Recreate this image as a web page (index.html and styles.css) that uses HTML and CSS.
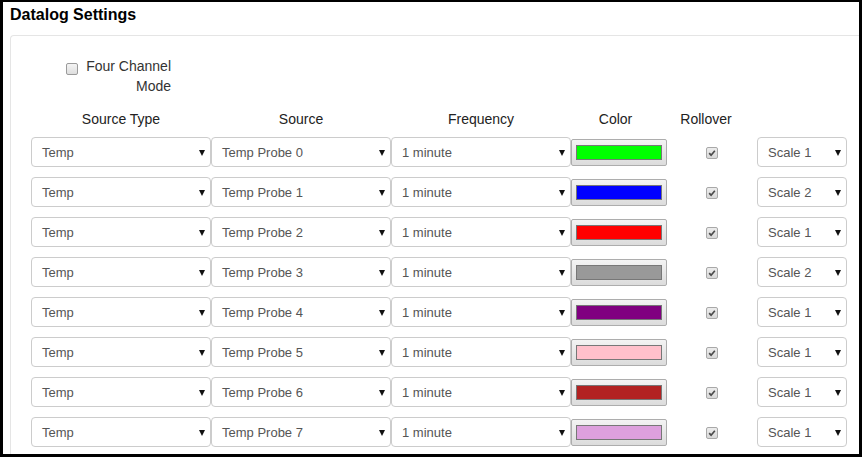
FILE: index.html
```html
<!DOCTYPE html>
<html>
<head>
<meta charset="utf-8">
<link rel="stylesheet" href="styles.css">
</head>
<body>
<div class="frame">
  <div class="title">Datalog Settings</div>
  <div class="panel">
    <div class="fourch">
      <span class="cb4"></span>
      <span class="fourch-text">Four Channel Mode</span>
    </div>
    <div class="grid head">
      <div class="h">Source Type</div>
      <div class="h">Source</div>
      <div class="h">Frequency</div>
      <div class="h h-color">Color</div>
      <div class="h h-roll">Rollover</div>
      <div></div>
    </div>

    <div class="grid row">
      <div class="sel"><span>Temp</span><i class="caret"></i></div>
      <div class="sel"><span>Temp Probe 0</span><i class="caret"></i></div>
      <div class="sel"><span>1 minute</span><i class="caret"></i></div>
      <div class="cbtn"><span class="sw sw-green"></span></div>
      <div class="rc"><span class="chk"><svg viewBox="0 0 12 12"><path d="M2.6 6.2 L4.9 8.6 L9.4 3.2" /></svg></span></div>
      <div class="sel"><span>Scale 1</span><i class="caret"></i></div>
    </div>
    <div class="grid row">
      <div class="sel"><span>Temp</span><i class="caret"></i></div>
      <div class="sel"><span>Temp Probe 1</span><i class="caret"></i></div>
      <div class="sel"><span>1 minute</span><i class="caret"></i></div>
      <div class="cbtn"><span class="sw sw-blue"></span></div>
      <div class="rc"><span class="chk"><svg viewBox="0 0 12 12"><path d="M2.6 6.2 L4.9 8.6 L9.4 3.2" /></svg></span></div>
      <div class="sel"><span>Scale 2</span><i class="caret"></i></div>
    </div>
    <div class="grid row">
      <div class="sel"><span>Temp</span><i class="caret"></i></div>
      <div class="sel"><span>Temp Probe 2</span><i class="caret"></i></div>
      <div class="sel"><span>1 minute</span><i class="caret"></i></div>
      <div class="cbtn"><span class="sw sw-red"></span></div>
      <div class="rc"><span class="chk"><svg viewBox="0 0 12 12"><path d="M2.6 6.2 L4.9 8.6 L9.4 3.2" /></svg></span></div>
      <div class="sel"><span>Scale 1</span><i class="caret"></i></div>
    </div>
    <div class="grid row">
      <div class="sel"><span>Temp</span><i class="caret"></i></div>
      <div class="sel"><span>Temp Probe 3</span><i class="caret"></i></div>
      <div class="sel"><span>1 minute</span><i class="caret"></i></div>
      <div class="cbtn"><span class="sw sw-gray"></span></div>
      <div class="rc"><span class="chk"><svg viewBox="0 0 12 12"><path d="M2.6 6.2 L4.9 8.6 L9.4 3.2" /></svg></span></div>
      <div class="sel"><span>Scale 2</span><i class="caret"></i></div>
    </div>
    <div class="grid row">
      <div class="sel"><span>Temp</span><i class="caret"></i></div>
      <div class="sel"><span>Temp Probe 4</span><i class="caret"></i></div>
      <div class="sel"><span>1 minute</span><i class="caret"></i></div>
      <div class="cbtn"><span class="sw sw-purple"></span></div>
      <div class="rc"><span class="chk"><svg viewBox="0 0 12 12"><path d="M2.6 6.2 L4.9 8.6 L9.4 3.2" /></svg></span></div>
      <div class="sel"><span>Scale 1</span><i class="caret"></i></div>
    </div>
    <div class="grid row">
      <div class="sel"><span>Temp</span><i class="caret"></i></div>
      <div class="sel"><span>Temp Probe 5</span><i class="caret"></i></div>
      <div class="sel"><span>1 minute</span><i class="caret"></i></div>
      <div class="cbtn"><span class="sw sw-pink"></span></div>
      <div class="rc"><span class="chk"><svg viewBox="0 0 12 12"><path d="M2.6 6.2 L4.9 8.6 L9.4 3.2" /></svg></span></div>
      <div class="sel"><span>Scale 1</span><i class="caret"></i></div>
    </div>
    <div class="grid row">
      <div class="sel"><span>Temp</span><i class="caret"></i></div>
      <div class="sel"><span>Temp Probe 6</span><i class="caret"></i></div>
      <div class="sel"><span>1 minute</span><i class="caret"></i></div>
      <div class="cbtn"><span class="sw sw-brick"></span></div>
      <div class="rc"><span class="chk"><svg viewBox="0 0 12 12"><path d="M2.6 6.2 L4.9 8.6 L9.4 3.2" /></svg></span></div>
      <div class="sel"><span>Scale 1</span><i class="caret"></i></div>
    </div>
    <div class="grid row">
      <div class="sel"><span>Temp</span><i class="caret"></i></div>
      <div class="sel"><span>Temp Probe 7</span><i class="caret"></i></div>
      <div class="sel"><span>1 minute</span><i class="caret"></i></div>
      <div class="cbtn"><span class="sw sw-plum"></span></div>
      <div class="rc"><span class="chk"><svg viewBox="0 0 12 12"><path d="M2.6 6.2 L4.9 8.6 L9.4 3.2" /></svg></span></div>
      <div class="sel"><span>Scale 1</span><i class="caret"></i></div>
    </div>
  </div>
</div>
</body>
</html>
```

FILE: styles.css
```css
html, body {
  margin: 0;
  padding: 0;
  background: #000;
}

body {
  font-family: "Liberation Sans", Arial, sans-serif;
  font-size: 14px;
  color: #333;
}

.frame {
  width: 862px;
  height: 457px;
  box-sizing: border-box;
  border-style: solid;
  border-color: #000;
  border-width: 2px 3px 3px 3px;
  background: #fff;
  overflow: hidden;
}

.title {
  height: 33px;
  box-sizing: border-box;
  padding: 4px 0 0 7px;
  font-size: 16px;
  font-weight: bold;
  line-height: 18px;
  color: #000;
}

.panel {
  margin-left: 7px;
  height: 430px;
  border-left: 1px solid #e5e5e5;
  border-top: 1px solid #e5e5e5;
  border-top-left-radius: 4px;
}

.fourch {
  display: flex;
  align-items: flex-start;
  margin-left: 55px;
  padding-top: 20px;
  line-height: 20px;
  color: #333;
}

.cb4 {
  width: 12px;
  height: 12px;
  margin-top: 7px;
  box-sizing: border-box;
  border: 1px solid #9b9b9b;
  border-radius: 2px;
  background: linear-gradient(#f4f4f4, #dedede);
}

.fourch-text {
  margin-left: 5px;
  width: 88px;
  text-align: right;
}

.grid {
  display: grid;
  grid-template-columns: 180px 180px 180px 96px 90px 90px;
  padding-left: 20px;
}

.head {
  margin-top: 13px;
  height: 20px;
  line-height: 20px;
  margin-bottom: 8px;
}

.h {
  text-align: center;
  color: #222;
}

.h-color {
  padding-right: 7px;
}

.h-roll {
  padding-right: 12px;
}

.row {
  height: 30px;
  margin-bottom: 10px;
}

.sel {
  height: 30px;
  box-sizing: border-box;
  border: 1px solid #ccc;
  border-radius: 4px;
  background: #fff;
  display: flex;
  align-items: center;
  justify-content: space-between;
  padding: 0 5px 0 10px;
  color: #555;
  font-size: 13px;
  white-space: nowrap;
}

.caret {
  width: 0;
  height: 0;
  border-left: 3.5px solid transparent;
  border-right: 3.5px solid transparent;
  border-top: 6px solid #111;
  margin-top: 1px;
}

.cbtn {
  align-self: center;
  width: 96px;
  height: 27px;
  box-sizing: border-box;
  border: 1px solid #adadad;
  border-radius: 2px;
  background: linear-gradient(#f3f3f3, #dcdcdc);
  display: flex;
  align-items: center;
  justify-content: center;
}

.sw {
  display: block;
  width: 86px;
  height: 15px;
  box-sizing: border-box;
  border: 1px solid #777;
}

.sw-green { background: #00ff00; }
.sw-blue { background: #0000ff; }
.sw-red { background: #ff0000; }
.sw-gray { background: #999999; }
.sw-purple { background: #800080; }
.sw-pink { background: #ffc0cb; }
.sw-brick { background: #b22222; }
.sw-plum { background: #dda0dd; }

.rc {
  display: flex;
  align-items: center;
  justify-content: center;
}

.chk {
  display: block;
  width: 12px;
  height: 12px;
  margin-top: 2px;
  box-sizing: border-box;
  border: 1px solid #a8a8a8;
  border-radius: 2px;
  background: linear-gradient(#ececec, #d8d8d8);
}

.chk svg {
  display: block;
  width: 10px;
  height: 10px;
}

.chk path {
  fill: none;
  stroke: #4a4a4a;
  stroke-width: 2;
}
```
